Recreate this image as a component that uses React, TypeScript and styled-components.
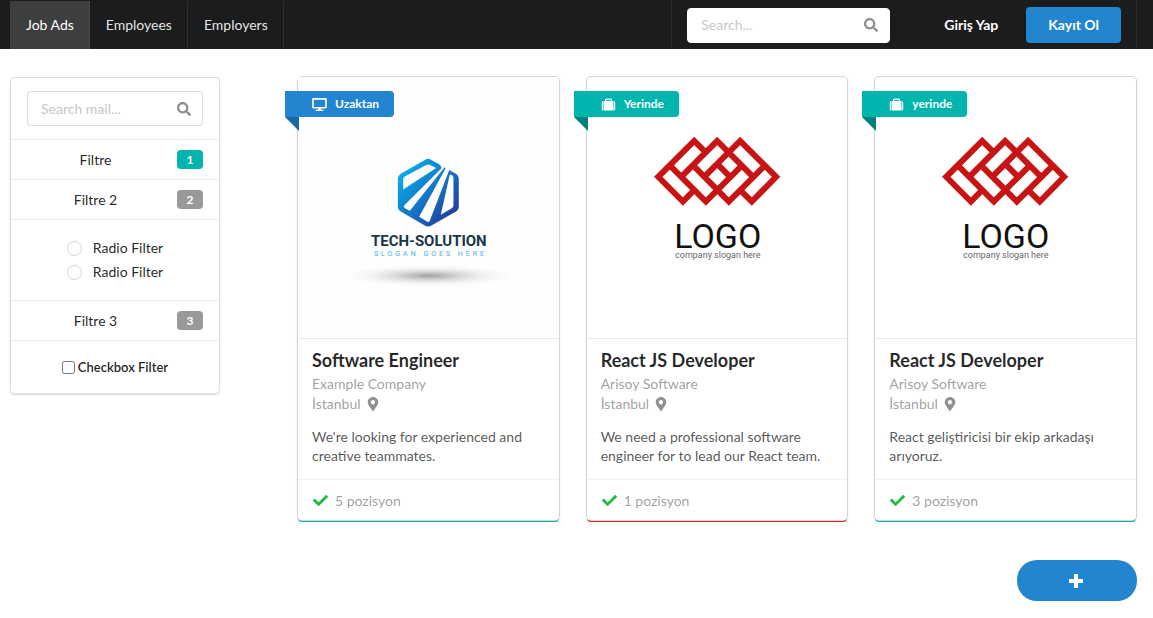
import React from "react";
import styled, { createGlobalStyle } from "styled-components";
import { FaCheck, FaDesktop, FaMapMarkerAlt, FaSearch } from "react-icons/fa";

const GlobalStyle = createGlobalStyle`
  *, *::before, *::after { box-sizing: border-box; }
  body {
    margin: 0;
    background: #fff;
    color: rgba(0, 0, 0, 0.87);
    font-family: Lato, "Helvetica Neue", Arial, sans-serif;
    font-size: 14px;
    line-height: 20px;
  }
  button, input { font: inherit; }
`;

const NavBar = styled.nav`
  display: flex;
  justify-content: space-between;
  height: 49px;
  padding: 1px 16px 0 10px;
  background: #1b1c1d;
`;

const NavGroup = styled.div`
  display: flex;
`;

const NavLink = styled.a<{ $active?: boolean }>`
  display: flex;
  align-items: center;
  padding: 0 15px 0 16px;
  border-right: 1px solid ${(p) => (p.$active ? "#444546" : "#2d2e2f")};
  background: ${(p) => (p.$active ? "#3d3e3f" : "transparent")};
  color: ${(p) => (p.$active ? "#fff" : "rgba(255, 255, 255, 0.9)")};
  text-decoration: none;
`;

const NavActions = styled.div`
  display: flex;
  align-items: center;
  padding: 0 15px;
  border: solid #2d2e2f;
  border-width: 0 1px;
`;

const SearchField = styled.label<{ $outlined?: boolean }>`
  display: flex;
  align-items: center;
  height: 35px;
  padding: 0 11px 0 13px;
  border: 1px solid ${(p) => (p.$outlined ? "rgba(34, 36, 38, 0.15)" : "#fff")};
  border-radius: 4px;
  background: #fff;
  color: #8f8f8f;

  svg {
    flex: none;
    font-size: 14px;
  }
`;

const SearchInput = styled.input<{ $width: string }>`
  width: ${(p) => p.$width};
  min-width: 0;
  flex: 1;
  padding: 0;
  border: 0;
  outline: 0;
  background: transparent;
  color: rgba(0, 0, 0, 0.87);

  &::placeholder {
    color: #c7c7c7;
    opacity: 1;
  }
`;

const NavButton = styled.button<{ $primary?: boolean }>`
  height: 36px;
  margin-left: ${(p) => (p.$primary ? "6px" : "32px")};
  padding: 0 22px;
  border: 0;
  border-radius: 4px;
  background: ${(p) => (p.$primary ? "#2185d0" : "transparent")};
  color: #fff;
  font-weight: 700;
  cursor: pointer;
`;

const Page = styled.main`
  display: grid;
  grid-template-columns: 210px 1fr;
  align-items: start;
  gap: 78px;
  padding: 28px 17px 40px 10px;
`;

const FilterMenu = styled.aside`
  border: 1px solid rgba(34, 36, 38, 0.15);
  border-radius: 4px;
  box-shadow: 0 1px 2px rgba(34, 36, 38, 0.15);
`;

const FilterSection = styled.div<{ $pad: string }>`
  padding: ${(p) => p.$pad};

  & + & {
    border-top: 1px solid rgba(34, 36, 38, 0.1);
  }
`;

const FilterLink = styled.a`
  display: grid;
  grid-template-columns: 1fr 26px;
  align-items: center;
  gap: 13px;
  height: 39px;
  color: rgba(0, 0, 0, 0.87);
  text-align: center;
  text-decoration: none;
`;

const Count = styled.span<{ $teal?: boolean }>`
  height: 19px;
  border-radius: 4px;
  background: ${(p) => (p.$teal ? "#00b5ad" : "#999")};
  color: #fff;
  font-size: 12px;
  font-weight: 700;
  line-height: 19px;
`;

const RadioLabel = styled.label`
  display: flex;
  align-items: center;
  justify-content: center;
  gap: 11px;
  height: 24px;
`;

const Radio = styled.input`
  appearance: none;
  width: 15px;
  height: 15px;
  margin: 0;
  border: 1px solid #d4d4d5;
  border-radius: 50%;
  background: #fff;

  &:checked {
    border: 4px solid #2185d0;
  }
`;

const CheckLabel = styled.label`
  display: flex;
  align-items: center;
  justify-content: center;
  gap: 3px;
  font-size: 13px;
  font-weight: 600;
  color: rgba(0, 0, 0, 0.87);
`;

const Checkbox = styled.input`
  width: 13px;
  height: 13px;
  margin: 0;
`;

const CardGrid = styled.div`
  display: grid;
  grid-template-columns: repeat(3, minmax(0, 1fr));
  gap: 28px;
`;

const Card = styled.article<{ $accent: string }>`
  position: relative;
  border-radius: 4px;
  background: #fff;
  box-shadow: 0 0 0 1px #d4d4d5, 0 2px 0 0 ${(p) => p.$accent},
    0 1px 3px 0 #d4d4d5;
`;

const CardImage = styled.div`
  aspect-ratio: 1;

  svg {
    display: block;
    width: 100%;
    height: 100%;
  }
`;

const Ribbon = styled.span<{ $color: string; $fold: string }>`
  position: absolute;
  top: 14px;
  left: -13px;
  display: flex;
  align-items: center;
  gap: 8px;
  height: 26px;
  padding: 0 15px 0 27px;
  border-radius: 0 4px 4px 0;
  background: ${(p) => p.$color};
  color: #fff;
  font-size: 12px;
  font-weight: 700;

  svg {
    width: 15px;
    height: 13px;
  }

  &::after {
    content: "";
    position: absolute;
    top: 100%;
    left: 0;
    border: solid transparent;
    border-width: 0 14px 14px 0;
    border-right-color: ${(p) => p.$fold};
  }
`;

const CardBody = styled.div`
  padding: 10px 14px 14px;
  border-top: 1px solid rgba(34, 36, 38, 0.1);
`;

const CardTitle = styled.h2`
  margin: 0 0 2px;
  color: rgba(0, 0, 0, 0.85);
  font-size: 18px;
  font-weight: 700;
  line-height: 23px;
`;

const Meta = styled.div`
  display: flex;
  align-items: center;
  gap: 5px;
  color: rgba(0, 0, 0, 0.4);

  svg {
    color: #8f8f8f;
  }
`;

const Description = styled.p`
  margin: 13px 0 0;
  color: rgba(0, 0, 0, 0.68);
  line-height: 19px;
`;

const CardFooter = styled.div`
  display: flex;
  align-items: center;
  gap: 7px;
  padding: 11px 15px 9px;
  border-top: 1px solid rgba(0, 0, 0, 0.05);
  color: rgba(0, 0, 0, 0.4);

  svg {
    color: #21ba45;
    font-size: 15px;
  }
`;

const AddRow = styled.div`
  display: flex;
  justify-content: flex-end;
  padding: 0 16px 17px;
`;

const AddButton = styled.button`
  display: flex;
  align-items: center;
  justify-content: center;
  width: 120px;
  height: 41px;
  padding: 2px 3px 0 0;
  border: 0;
  border-radius: 20px;
  background: #2185d0;
  color: #fff;
  cursor: pointer;
`;

const PlusIcon = () => (
  <svg width="14" height="14" viewBox="0 0 14 14" fill="currentColor">
    <path d="M5 0H9V5H14V9H9V14H5V9H0V5H5Z" />
  </svg>
);

const SuitcaseIcon = () => (
  <svg viewBox="0 0 15 13" fill="currentColor">
    <path d="M4 3V1.6Q4 0.5 5.1 0.5H9.9Q11 0.5 11 1.6V3H12V12.5H3V3ZM5.3 3H9.7V1.8H5.3Z" />
    <path d="M2.5 3V12.5H2.2Q0.8 12.5 0.8 11V4.500Q0.8 3 2.200 3Z" />
    <path d="M12.500 3V12.500H12.800Q14.200 12.500 14.200 11V4.500Q14.200 3 12.800 3Z" />
  </svg>
);

const TechLogo = () => (
  <svg viewBox="0 0 261 261" role="img" aria-label="Tech-Solution">
    <defs>
      <linearGradient id="hex" x1="0" y1="0" x2="1" y2="1">
        <stop offset="0.1" stopColor="#0aaeee" />
        <stop offset="0.5" stopColor="#1478c8" />
        <stop offset="0.9" stopColor="#223a9a" />
      </linearGradient>
      <radialGradient id="ground">
        <stop offset="0" stopColor="#000" stopOpacity="0.36" />
        <stop offset="0.4" stopColor="#000" stopOpacity="0.14" />
        <stop offset="0.7" stopColor="#000" stopOpacity="0.04" />
        <stop offset="1" stopColor="#000" stopOpacity="0" />
      </radialGradient>
    </defs>
    <rect width="261" height="261" fill="#fefefe" />
    <g transform="translate(96 78) scale(0.3333)">
      <path
        d="M93 15Q103 8 113 15L185 56Q195 62 195 73V154Q195 165 185 171L113 212Q103 218 93 212L22 171Q12 165 12 154V73Q12 62 22 56Z"
        fill="url(#hex)"
      />
      <g fill="#fefefe">
        <path d="M28 74Q28 67 34 64L97 30Q103 27 109 30L127 39L28 104Z" />
        <path d="M139 28L153 36L48 168L36 162Q28 158 30 153L143 40Z" />
        <path d="M157 37L167 44L107 200Q103 202 98 199L76 186Z" />
        <path d="M168 59L175 61Q179 63 179 69V151Q179 157 174 160L141 180Z" />
      </g>
    </g>
    <text
      x="131"
      y="169"
      textAnchor="middle"
      fontFamily="Roboto, sans-serif"
      fontSize="15"
      fontWeight="700"
      fill="#173746"
    >
      TECH-SOLUTION
    </text>
    <text
      x="76"
      y="179"
      fontFamily="Roboto, sans-serif"
      fontSize="7"
      letterSpacing="3"
      fill="#3fb0e6"
    >
      SLOGAN GOES HERE
    </text>
    <ellipse cx="131" cy="199" rx="84" ry="11" fill="url(#ground)" />
  </svg>
);

const LatticeLogo = () => (
  <svg viewBox="0 0 261 261" role="img" aria-label="Company logo">
    <g
      transform="translate(53 48) scale(0.3333)"
      fill="none"
      stroke="#c81414"
      strokeWidth="18"
    >
      <path d="M197 82L163 48L55 156L129 230L163 196" />
      <path d="M301 196L336 230L409 156L301 48L193 156" />
      <path d="M124 156L232 48L340 156" />
      <path d="M89 121L198 230L306 122" />
      <path d="M159 121L267 230L375 122" />
      <path d="M232 117L271 156" />
    </g>
    <text
      x="131"
      y="171"
      textAnchor="middle"
      fontFamily="Roboto, sans-serif"
      fontSize="34"
      fill="#111"
    >
      LOGO
    </text>
    <text
      x="131"
      y="181"
      textAnchor="middle"
      fontFamily="Roboto, sans-serif"
      fontSize="9"
      fill="#666"
    >
      company slogan here
    </text>
  </svg>
);

type Job = {
  title: string;
  company: string;
  text: string;
  positions: number;
  place: string;
  remote?: boolean;
  accent: string;
};

const jobs: Job[] = [
  {
    title: "Software Engineer",
    company: "Example Company",
    text: "We're looking for experienced and creative teammates.",
    positions: 5,
    place: "Uzaktan",
    remote: true,
    accent: "#00b5ad",
  },
  {
    title: "React JS Developer",
    company: "Arisoy Software",
    text: "We need a professional software engineer for to lead our React team.",
    positions: 1,
    place: "Yerinde",
    accent: "#db2828",
  },
  {
    title: "React JS Developer",
    company: "Arisoy Software",
    text: "React geliştiricisi bir ekip arkadaşı arıyoruz.",
    positions: 3,
    place: "yerinde",
    accent: "#00b5ad",
  },
];

const JobCard = ({ job }: { job: Job }) => (
  <Card $accent={job.accent}>
    <CardImage>{job.remote ? <TechLogo /> : <LatticeLogo />}</CardImage>
    <Ribbon
      $color={job.remote ? "#2185d0" : "#00b5ad"}
      $fold={job.remote ? "#1a69a4" : "#00827c"}
    >
      {job.remote ? <FaDesktop /> : <SuitcaseIcon />}
      {job.place}
    </Ribbon>
    <CardBody>
      <CardTitle>{job.title}</CardTitle>
      <Meta>{job.company}</Meta>
      <Meta>
        İstanbul <FaMapMarkerAlt />
      </Meta>
      <Description>{job.text}</Description>
    </CardBody>
    <CardFooter>
      <FaCheck />
      {job.positions} pozisyon
    </CardFooter>
  </Card>
);

export default function App() {
  return (
    <>
      <GlobalStyle />
      <NavBar>
        <NavGroup>
          <NavLink href="#jobs" $active>
            Job Ads
          </NavLink>
          <NavLink href="#employees">Employees</NavLink>
          <NavLink href="#employers">Employers</NavLink>
        </NavGroup>
        <NavActions>
          <SearchField>
            <SearchInput
              $width="163px"
              placeholder="Search..."
              aria-label="Search"
            />
            <FaSearch />
          </SearchField>
          <NavButton>Giriş Yap</NavButton>
          <NavButton $primary>Kayıt Ol</NavButton>
        </NavActions>
      </NavBar>
      <Page>
        <FilterMenu>
          <FilterSection $pad="13px 16px">
            <SearchField $outlined>
              <SearchInput
                $width="100%"
                placeholder="Search mail..."
                aria-label="Search mail"
              />
              <FaSearch />
            </SearchField>
          </FilterSection>
          <FilterSection $pad="0 16px">
            <FilterLink href="#filter-1">
              Filtre <Count $teal>1</Count>
            </FilterLink>
          </FilterSection>
          <FilterSection $pad="0 16px">
            <FilterLink href="#filter-2">
              Filtre 2 <Count>2</Count>
            </FilterLink>
          </FilterSection>
          <FilterSection $pad="16px">
            <RadioLabel>
              <Radio type="radio" name="radio-filter" />
              Radio Filter
            </RadioLabel>
            <RadioLabel>
              <Radio type="radio" name="radio-filter" />
              Radio Filter
            </RadioLabel>
          </FilterSection>
          <FilterSection $pad="0 16px">
            <FilterLink href="#filter-3">
              Filtre 3 <Count>3</Count>
            </FilterLink>
          </FilterSection>
          <FilterSection $pad="16px">
            <CheckLabel>
              <Checkbox type="checkbox" />
              Checkbox Filter
            </CheckLabel>
          </FilterSection>
        </FilterMenu>
        <CardGrid>
          {jobs.map((job) => (
            <JobCard key={job.text} job={job} />
          ))}
        </CardGrid>
      </Page>
      <AddRow>
        <AddButton aria-label="Add job ad">
          <PlusIcon />
        </AddButton>
      </AddRow>
    </>
  );
}
